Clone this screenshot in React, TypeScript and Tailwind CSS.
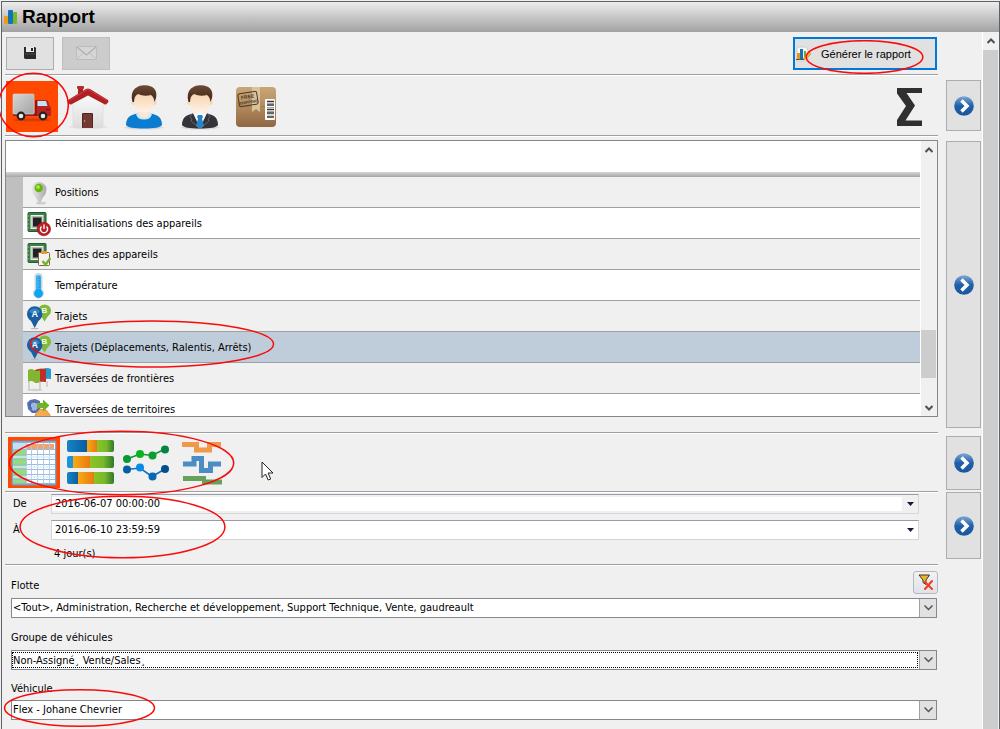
import React, { useState } from 'react';
import { clsx } from 'clsx';

type IconProps = { className?: string };

const TruckIcon = () => (
  <svg width="40" height="30" viewBox="0 0 40 30" className="mt-[2px]">
    <defs>
      <linearGradient id="cargo" x1="0" y1="0" x2="1" y2="1">
        <stop offset="0" stopColor="#d6d6d6" />
        <stop offset="1" stopColor="#a3a3a3" />
      </linearGradient>
    </defs>
    <ellipse cx="20" cy="27" rx="19" ry="1.500" fill="#d43c00" />
    <rect x="1" y="20" width="38" height="3" rx="1" fill="#8d2020" />
    <rect x="1" y="1" width="21" height="20" rx="1" fill="url(#cargo)" stroke="#dcdcdc" strokeWidth=".6" />
    <path d="M23 7h11q2 0 2.500 2l1 4q1.500.5 1.500 2v7q0 1-1 1H23z" fill="#b92323" />
    <path d="M25.500 8h8.500l1.500 5h-10z" fill="#bde6fb" />
    <path d="M25 7h-2v16h2z" fill="#8e1717" />
    <path d="M34 16.500h4" stroke="#7a1212" />
    <circle cx="9" cy="23" r="4.400" fill="#222" />
    <circle cx="9" cy="23" r="2.300" fill="#e9e9e9" />
    <circle cx="31" cy="23" r="4.400" fill="#222" />
    <circle cx="31" cy="23" r="2.300" fill="#e9e9e9" />
  </svg>
);

const HouseIcon = () => (
  <svg width="42" height="46" viewBox="0 0 42 46">
    <defs>
      <linearGradient id="wall" x1="0" y1="0" x2="0" y2="1">
        <stop offset="0" stopColor="#fdfdfd" />
        <stop offset="1" stopColor="#dcdcdc" />
      </linearGradient>
    </defs>
    <ellipse cx="21" cy="43" rx="20" ry="1.800" fill="#e5e5e5" />
    <path d="M6 17L21 7l15 10v24q0 3-3 3H9q-3 0-3-3z" fill="url(#wall)" stroke="#d5d5d5" strokeWidth=".5" />
    <path d="M11 4h5v6l-5 4z" fill="#a92424" />
    <rect x="10" y="2" width="7" height="3" rx="1" fill="#b52b2b" />
    <path d="M1 16L19 5q2-1.200 4 0l18 11q1 1 0 2.500L39.500 20q-1 1-2.500 0L21 11.500 5 20q-1.500 1-2.500 0L1 18.500Q.5 17 1 16z" fill="#b02024" />
    <path d="M2 16.500L20 5.800q1-.5 2 0l18 10.700" fill="none" stroke="#cf4043" strokeWidth="1" />
    <path d="M15 44V30.500q0-1.500 1.500-1.500h8q1.500 0 1.500 1.500V44z" fill="#733a33" />
    <path d="M15.500 43.500V30q0-.5.500-.5h9q.5 0 .5.5v13.500" fill="none" stroke="#54241f" />
    <circle cx="17.500" cy="37" r=".8" fill="#d8b36c" />
  </svg>
);

const PersonIcon = ({ suit = false }: { suit?: boolean }) => (
  <svg width="40" height="46" viewBox="0 0 40 46">
    <defs>
      <linearGradient id="skin" x1="0" y1="0" x2="0" y2="1">
        <stop offset="0" stopColor="#f3c9a0" />
        <stop offset="1" stopColor="#fff3e6" />
      </linearGradient>
      <linearGradient id="hair" x1="0" y1="0" x2="0" y2="1">
        <stop offset="0" stopColor="#6d4a35" />
        <stop offset="1" stopColor="#3c2416" />
      </linearGradient>
    </defs>
    <ellipse cx="20" cy="43.500" rx="19.500" ry="2" fill="#d9d9d9" />
    <path d="M2 41q0-7 5-9.500 4-2 8-2.500h10q4 .5 8 2.500 5 2.500 5 9.500-2 3.500-18 3.500T2 41z" fill={suit ? '#333338' : '#0b7cd0'} />
    {suit ? (
      <>
        <path d="M13 29h14l-7 15z" fill="#fafafa" />
        <path d="M18 31h4l1 2-1 1.500 2 7.500-4 3-4-3 2-7.500-1-1.500z" fill="#1f86cf" />
        <path d="M13 29l-3 4 2 2-1 2 8.500 7M27 29l3 4-2 2 1 2-8.500 7" fill="none" stroke="#77777c" strokeWidth=".7" />
      </>
    ) : (
      <path d="M12 30q1 5.500 8 5.500T28 30l-2-1.500H14z" fill="#cfe8f8" />
    )}
    <path d="M15 25h10v5q-1 3.500-5 3.500T15 30z" fill={suit ? 'none' : '#fbe7d2'} />
    <ellipse cx="9.500" cy="18" rx="2" ry="3" fill="#f6d3af" />
    <ellipse cx="30.500" cy="18" rx="2" ry="3" fill="#f6d3af" />
    <path d="M9.500 12q0-8 10.500-8t10.500 8v7q-2 9.500-10.500 9.500T9.500 19z" fill="url(#skin)" />
    <path d="M8.500 18Q6 9 11 4.500 16 0 24 1.500q10 2 8 12.500l-1.500 4q-.5-5-3.500-7-7 2-13-1-4 2-4 8z" fill="url(#hair)" />
  </svg>
);

const PackageIcon = () => (
  <svg width="40" height="40" viewBox="0 0 40 40">
    <defs>
      <linearGradient id="carton" x1="0" y1="0" x2="0" y2="1">
        <stop offset="0" stopColor="#c9a777" />
        <stop offset=".5" stopColor="#b18a5c" />
        <stop offset="1" stopColor="#916643" />
      </linearGradient>
    </defs>
    <rect width="40" height="40" rx="4" fill="url(#carton)" />
    <path d="M1 19.500h38" stroke="#a37c50" />
    <path d="M16 0h8v25l-4-3-4 3z" fill="#dac39b" />
    <g transform="rotate(-9 12 12)">
      <rect x="2.500" y="5.500" width="19" height="13" rx="2" fill="none" stroke="#49382a" />
      <text x="12" y="11.500" textAnchor="middle" fontSize="5" fontWeight="bold" fontFamily="Liberation Sans" fill="#49382a">FREE</text>
      <text x="12" y="16.500" textAnchor="middle" fontSize="4" fontWeight="bold" fontFamily="Liberation Sans" fill="#49382a">SHIPPING</text>
    </g>
    <rect x="29" y="12" width="10" height="21" rx="1" fill="#fff" />
    <path d="M31 14.500h7M31 18h7M31 22.500h7M31 26h7M31 30h7" stroke="#333" strokeWidth="1.300" />
    <path d="M31 16.500h7M31 20.500h7M31 24.500h7M31 28h7" stroke="#666" strokeWidth=".6" />
  </svg>
);

const SumIcon = () => (
  <svg width="26" height="38" viewBox="0 0 26 38">
    <path d="M0 0h25v5H9.500L18 17.500 8.500 32.500H25V38H0v-6l9-14L0 5.500z" fill="#303030" />
  </svg>
);

const LogoIcon = () => (
  <svg width="14" height="15" viewBox="0 0 14 15">
    <rect x="0" y="6" width="4" height="8" rx="1" fill="#f29a12" />
    <rect x="4" y="0" width="5" height="14" rx="1" fill="#0d74bd" />
    <rect x="9" y="2" width="4" height="12" rx="1" fill="#7bb827" />
  </svg>
);

const SaveIcon = () => (
  <svg width="12" height="12" viewBox="0 0 12 12" className="-mt-[2px]">
    <path d="M0 0h11l1 1v11H1l-1-1z" fill="#2b2b2b" />
    <rect x="2" y="0" width="8" height="5" fill="#e9e9e9" />
    <rect x="7" y="1" width="2" height="3" fill="#262626" />
    <path d="M1 7h10" stroke="#4b4b4b" />
  </svg>
);

const MailIcon = () => (
  <svg width="21" height="15" viewBox="0 0 21 15">
    <rect x=".5" y=".5" width="20" height="13" rx="1" fill="#d6d6d6" stroke="#bcbcbc" />
    <path d="M1 13l7-6.500M20 13l-7-6.500" stroke="#c2c2c2" fill="none" />
    <path d="M1 1l9.500 8L20 1" stroke="#b1b1b1" fill="none" strokeWidth="1.300" />
  </svg>
);

const ReportIcon = () => (
  <svg width="15" height="16" viewBox="0 0 15 16">
    <path d="M1 1h9l2 3v11H1z" fill="#f8f8f8" stroke="#cdcdcd" />
    <rect x="1" y="7" width="3" height="6" fill="#ef9316" />
    <rect x="4" y="3" width="3" height="10" fill="#1474b8" />
    <rect x="8" y="5" width="2" height="8" fill="#69ac28" />
    <path d="M8 11l5-5 2 2-5 5-3 1z" fill="#f5b531" stroke="#b78021" strokeWidth=".5" />
    <path d="M0 13.500h8" stroke="#555" />
  </svg>
);

const NextIcon = () => (
  <svg width="20" height="20" viewBox="0 0 20 20">
    <defs>
      <linearGradient id="ball" x1="0" y1="0" x2="0" y2="1">
        <stop offset="0" stopColor="#7fa8d8" />
        <stop offset=".5" stopColor="#205fa6" />
        <stop offset="1" stopColor="#19569f" />
      </linearGradient>
    </defs>
    <circle cx="10" cy="10" r="9.800" fill="url(#ball)" />
    <path d="M7.500 4.500L13 10l-5.500 5.500" fill="none" stroke="#fff" strokeWidth="3.500" />
  </svg>
);

const PositionIcon = () => (
  <svg width="24" height="26" viewBox="0 0 24 26">
    <defs>
      <linearGradient id="pin" x1="0" y1="0" x2="1" y2="0">
        <stop offset="0" stopColor="#e9e9e9" />
        <stop offset="1" stopColor="#aaaaac" />
      </linearGradient>
    </defs>
    <ellipse cx="14" cy="23" rx="5" ry="1.500" fill="#cfcfcf" />
    <path d="M4.500 9.500a7.500 7.500 0 0 1 15 0q0 4-3.500 8L12.500 24 8 16.500Q4.500 13 4.500 9.500z" fill="url(#pin)" />
    <circle cx="11.700" cy="8" r="4.200" fill="#65b80b" />
    <circle cx="11" cy="7" r="2" fill="#a3e33e" />
  </svg>
);

const Chip = () => (
  <>
    <rect x="1" y="1.500" width="18" height="19" rx="1" fill="#3d8047" stroke="#1f5d2d" />
    <rect x="4" y="4.500" width="12" height="13" fill="#b5bab5" stroke="#eef2ee" />
    <rect x="6" y="6.500" width="8.500" height="9" fill="#222" />
    <path d="M0 5h2M0 9h2M0 13h2M0 17h2" stroke="#88c48b" />
  </>
);

const ResetIcon = () => (
  <svg width="24" height="26" viewBox="0 0 24 26">
    <Chip />
    <circle cx="16.800" cy="18" r="6.800" fill="#bd2024" stroke="#8f1719" strokeWidth=".6" />
    <path d="M14.500 15.500a3.600 3.600 0 1 0 5 0M17 13.500v4.500" fill="none" stroke="#fff" strokeWidth="1.400" />
  </svg>
);

const TaskIcon = () => (
  <svg width="24" height="26" viewBox="0 0 24 26">
    <Chip />
    <rect x="11.500" y="10.500" width="11" height="13" rx="1" fill="#f4f2ef" stroke="#8e5a3f" />
    <rect x="14" y="9" width="6" height="3" rx="1" fill="#e59a2f" />
    <path d="M15.500 19l3 3.500L23.500 16" fill="none" stroke="#6db52c" strokeWidth="2.400" />
  </svg>
);

const ThermometerIcon = () => (
  <svg width="24" height="26" viewBox="0 0 24 26">
    <path d="M8 3q0-2.500 3.500-2.500T15 3v13.500a5 5 0 1 1-7 0z" fill="#d6e1e8" stroke="#b4c3cc" strokeWidth=".7" />
    <path d="M9 3.500q0-1.500 2.500-1.500T14 3.500V18H9z" fill="#37b2f5" />
    <circle cx="11.500" cy="20.500" r="4.400" fill="#0aa5f5" />
    <path d="M11.500 5h2M11.500 8h2M11.500 11h2M11.500 14h2" stroke="#1675b4" strokeWidth=".8" />
  </svg>
);

const TripIcon = () => (
  <svg width="24" height="26" viewBox="0 0 24 26">
    <path d="M11 6.500a6.500 6 0 0 1 13 0q0 3.500-3 5.500l-3.500 5.500-3.500-5.500Q11 10 11 6.500z" fill="#82b93c" />
    <path d="M0 10a7.700 7.700 0 0 1 15.400 0q0 4-4 7L7.700 24 4 17Q0 14 0 10z" fill="#195f9f" />
    <path d="M2 8a6 6 0 0 1 11 0q-5 3-11 0z" fill="#3686c4" />
    <ellipse cx="7.700" cy="24.500" rx="4" ry=".8" fill="#bbb" />
    <text x="7.700" y="13" textAnchor="middle" fontSize="9" fontWeight="bold" fontFamily="Liberation Sans" fill="#fff">A</text>
    <text x="17.500" y="9" textAnchor="middle" fontSize="8" fontWeight="bold" fontFamily="Liberation Sans" fill="#eff9df">B</text>
  </svg>
);

const BorderIcon = () => (
  <svg width="24" height="26" viewBox="0 0 24 26">
    <ellipse cx="8" cy="24" rx="8" ry="1.200" fill="#d2d2d2" />
    <path d="M16 3q4-2 8 0v10q-4-1-8 1z" fill="#249bcb" />
    <path d="M8 4q5-2.500 11-1v13q-5-1-11 1z" fill="#bc3026" />
    <path d="M1 4q3-2 6 0t6 0v12q-3 2-6 0t-6 0z" fill="#82b532" />
    <path d="M2 16v8M13 15v9M20 15v6" stroke="#b5b5b5" />
  </svg>
);

const TerritoryIcon = () => (
  <svg width="24" height="26" viewBox="0 0 24 26">
    <path d="M0 6l3-3 5-1 5 2v9l-4 3H5l-4-4z" fill="#5570b5" />
    <path d="M3 7l3-2 5 1 1 4-3 4H5z" fill="#a0b5e3" stroke="#3c4f8b" strokeDasharray="2 1" />
    <path d="M8 18l5-6 6 1 4 5-2 7H10z" fill="#f3ac4e" stroke="#e2882b" />
    <path d="M10 6h6V2.500l6.500 6-6.500 6V11h-6z" fill="#6db42b" />
  </svg>
);

const TableIcon = () => (
  <svg width="46" height="46" viewBox="0 0 46 46">
    <rect x="1" y="1" width="44" height="44" rx="1" fill="#8bb4d9" stroke="#6b98c3" />
    <rect x="2" y="3" width="42" height="40" fill="#fff" />
    <rect x="15" y="4" width="28" height="5" fill="#f3a26a" />
    <rect x="2" y="10" width="13" height="33" fill="#96d97f" />
    <rect x="2" y="3" width="13" height="6" fill="#c8def1" />
    <path d="M2 9.500h42M2 14.500h42M2 19.500h42M2 24.500h42M2 29.500h42M2 34.500h42M2 39.500h42" stroke="#96bde0" />
    <path d="M15.500 3v40M20.500 3v40M26.500 3v40M32.500 3v40M38.500 3v40" stroke="#a9c9e6" />
    <path d="M2 17h42M2 27h42M2 37h42" stroke="#dcecfa" strokeWidth="2" opacity=".7" />
  </svg>
);

const StackedIcon = () => (
  <svg width="48" height="46" viewBox="0 0 48 46">
    <defs>
      <linearGradient id="sb" x1="0" x2="1">
        <stop offset="0" stopColor="#1685c5" />
        <stop offset="1" stopColor="#07549a" />
      </linearGradient>
      <linearGradient id="so" x1="0" x2="1">
        <stop offset="0" stopColor="#f7ab12" />
        <stop offset="1" stopColor="#e97914" />
      </linearGradient>
      <linearGradient id="sg" x1="0" x2="1">
        <stop offset="0" stopColor="#90c822" />
        <stop offset=".6" stopColor="#78b829" />
        <stop offset="1" stopColor="#2f7a2b" />
      </linearGradient>
    </defs>
    <rect x="1" y="0" width="24" height="12" rx="2" fill="url(#sb)" />
    <rect x="29" y="0" width="19" height="12" rx="2" fill="url(#sg)" />
    <rect x="21" y="0" width="10" height="12" fill="url(#so)" />
    <rect x="1" y="16" width="9" height="12" rx="2" fill="#1c94db" />
    <rect x="21" y="16" width="27" height="12" rx="2" fill="url(#sg)" />
    <rect x="7" y="16" width="17" height="12" fill="url(#so)" />
    <rect x="1" y="32" width="14" height="12" rx="2" fill="url(#sb)" />
    <rect x="25" y="32" width="23" height="12" rx="2" fill="url(#sg)" />
    <rect x="12" y="32" width="16" height="12" fill="url(#so)" />
  </svg>
);

const LinesIcon = () => (
  <svg width="46" height="36" viewBox="0 0 46 36">
    <path d="M4 14l13-5 12 1.500L42 4" fill="none" stroke="#14913a" strokeWidth="1.600" />
    <circle cx="4" cy="14" r="4" fill="#069a35" />
    <circle cx="17" cy="9" r="4" fill="#09b51e" />
    <circle cx="29.500" cy="10.500" r="4" fill="#0a9f2f" />
    <circle cx="42" cy="4.500" r="4" fill="#048442" />
    <path d="M4 24.500L17 23l12 8.500 13-7.500" fill="none" stroke="#136eb5" strokeWidth="1.600" />
    <circle cx="4" cy="24.500" r="4" fill="#075da4" />
    <circle cx="17" cy="22.500" r="4" fill="#078ae8" />
    <circle cx="29.500" cy="31.500" r="4" fill="#0567b5" />
    <circle cx="42" cy="24" r="4" fill="#034f8a" />
  </svg>
);

const StepsIcon = () => (
  <svg width="40" height="44" viewBox="0 0 40 44">
    <path d="M0 3.500h14.500V9h13V3.500H39" fill="none" stroke="#ee9a4a" strokeWidth="5" />
    <path d="M1 23h11v-5.500h7.500v12h9V23H39" fill="none" stroke="#4a8cc4" strokeWidth="5" />
    <path d="M1 37.500h23M20 41h20" fill="none" stroke="#66a05a" strokeWidth="5" />
  </svg>
);

const FilterClearIcon = () => (
  <svg width="16" height="17" viewBox="0 0 16 17">
    <path d="M1 1h10.500L8 6v4.500L5 8.500V6z" fill="#e8b62f" stroke="#44351a" />
    <path d="M7 8l7 7M14 7l-7 8" stroke="#f23b21" strokeWidth="2" strokeLinecap="round" />
  </svg>
);

const Chevron = ({ className }: IconProps) => (
  <svg width="9" height="6" viewBox="0 0 9 6" className={className}>
    <path d="M.5 .5l4 4 4-4" fill="none" stroke="#555" strokeWidth="1.500" />
  </svg>
);

const ScrollArrow = ({ className }: IconProps) => (
  <svg width="8" height="6" viewBox="0 0 8 6" className={className}>
    <path d="M.5 1L4 4.500 7.500 1" fill="none" stroke="#505050" strokeWidth="2" />
  </svg>
);

const Pointer = ({ className }: IconProps) => (
  <svg width="13" height="20" viewBox="0 0 13 20" className={className}>
    <path d="M1 1v15.500l3.500-3.500 2.700 6 2.500-1-2.600-6H12z" fill="#fff" stroke="#222" />
  </svg>
);

// Red marker drawn around a control
const Ring = ({ className }: IconProps) => (
  <svg className={clsx('pointer-events-none absolute z-10 max-w-none', className)} aria-hidden="true">
    <ellipse cx="50%" cy="50%" rx="49%" ry="48%" fill="none" stroke="#fa0a0a" strokeWidth="1.500" />
  </svg>
);

const Divider = () => <div className="mr-px ml-[3px] h-[2px] border-t border-[#a0a0a0] bg-white" />;

const reportTypes = [
  { label: 'Positions', Icon: PositionIcon },
  { label: 'Réinitialisations des appareils', Icon: ResetIcon },
  { label: 'Tâches des appareils', Icon: TaskIcon },
  { label: 'Température', Icon: ThermometerIcon },
  { label: 'Trajets', Icon: TripIcon },
  { label: 'Trajets (Déplacements, Ralentis, Arrêts)', Icon: TripIcon },
  { label: 'Traversées de frontières', Icon: BorderIcon },
  { label: 'Traversées de territoires', Icon: TerritoryIcon },
];

const subjects = [
  { label: 'Véhicules', icon: <TruckIcon /> },
  { label: 'Sites', icon: <HouseIcon /> },
  { label: 'Utilisateurs', icon: <PersonIcon /> },
  { label: 'Chauffeurs', icon: <PersonIcon suit /> },
  { label: 'Colis', icon: <PackageIcon /> },
];

const views = [
  { label: 'Tableau', icon: <TableIcon /> },
  { label: 'Barres', icon: <StackedIcon /> },
  { label: 'Lignes', icon: <LinesIcon /> },
  { label: 'Étapes', icon: <StepsIcon /> },
];

interface TabsProps {
  items: { label: string; icon: React.ReactNode }[];
}

const IconTabs: React.FC<TabsProps> = ({ items }) => {
  const [active, setActive] = useState(0);
  return (
    <div className="flex gap-1">
      {items.map((item, i) => (
        <button
          key={item.label}
          aria-label={item.label}
          onClick={() => setActive(i)}
          className={clsx('flex h-[51px] w-[52px] items-center justify-center', active === i && 'bg-[#ff4800]')}
        >
          {item.icon}
        </button>
      ))}
    </div>
  );
};

interface DateFieldProps {
  id: string;
  label: string;
  value: string;
  muted?: boolean;
}

const DateField: React.FC<DateFieldProps> = ({ id, label, value, muted }) => {
  const [text, setText] = useState(value);
  return (
    <div className="flex items-center">
      <label htmlFor={id} className="w-[38px]">{label}</label>
      <div className={clsx('flex h-5 flex-1 items-center border border-[#d5d5dc] border-t-[#9a9aa8]', muted ? 'bg-[#f0f0f0]' : 'bg-white')}>
        <input
          id={id}
          value={text}
          onChange={(e) => setText(e.target.value)}
          className="h-[14px] min-w-0 flex-1 bg-white px-[3px] outline-none"
        />
        <button aria-label={`Choisir ${label}`} className="flex h-full w-4 items-center justify-center">
          <svg width="7" height="4" viewBox="0 0 7 4"><path d="M0 0h7L3.500 4z" fill="#1c1838" /></svg>
        </button>
      </div>
    </div>
  );
};

interface ComboProps {
  id: string;
  value: string;
  focused?: boolean;
}

const Combo: React.FC<ComboProps> = ({ id, value, focused }) => (
  <div className="relative flex h-5 border border-[#828790] bg-white">
    <select
      id={id}
      className={clsx(
        'min-w-0 flex-1 appearance-none bg-white outline-none',
        focused ? 'my-px mr-[18px] border border-dotted border-black' : 'mr-[18px] pl-px'
      )}
    >
      <option>{value}</option>
    </select>
    <span className="pointer-events-none absolute inset-y-0 right-0 flex w-[17px] items-center justify-center border-l border-[#a0a0a0] bg-[#e1e1e1]">
      <Chevron />
    </span>
  </div>
);

const sideButtons = ['h-[51px] mb-[10px]', 'h-[287px] mb-2', 'h-[54px] mb-[2px]', 'h-[67px]'];

export default function App() {
  const [selected, setSelected] = useState(5);

  return (
    <div className="flex min-h-screen overflow-hidden bg-[#f0f0f0] pt-px pl-px font-['DejaVu_Sans_Condensed','DejaVu_Sans',sans-serif] text-[11px] leading-4 text-black">
      <div className="flex flex-1 flex-col border-t border-r border-l border-[#5f6264]">
        <header className="flex h-[30px] items-center gap-1 bg-linear-to-b from-[#ededed] to-[#a2a2a2] pl-[2px]">
          <LogoIcon />
          <h1 className="font-['Liberation_Sans',Arial,sans-serif] text-[19px] leading-6 font-bold">Rapport</h1>
        </header>

        <div className="flex flex-1">
          <main className="min-w-0 flex-1">
            <div className="flex justify-between pt-[5px] pr-[2px] pb-1 pl-1">
              <div className="flex gap-2">
                <button aria-label="Enregistrer" className="flex h-[33px] w-12 items-center justify-center border border-[#adadad] bg-[#e1e1e1]">
                  <SaveIcon />
                </button>
                <button aria-label="Envoyer" disabled className="flex h-[33px] w-12 items-center justify-center border border-[#bfbfbf] bg-[#cccccc]">
                  <MailIcon />
                </button>
              </div>
              <button className="relative flex h-[33px] w-36 items-center gap-[10px] border-2 border-[#0078d7] bg-[#e1e1e1] pl-px">
                <ReportIcon />
                <span className="font-['Liberation_Sans',Arial,sans-serif]">Générer le rapport</span>
                <Ring className="top-px left-[10px] h-[34px] w-[119px]" />
              </button>
            </div>
            <Divider />

            <div className="relative flex items-center justify-between pt-[5px] pr-4 pb-[3px] pl-1">
              <IconTabs items={subjects} />
              <button aria-label="Somme"><SumIcon /></button>
              <Ring className="-top-1 -left-1 h-[66px] w-[71px]" />
            </div>
            <Divider />

            <section className="mt-[3px] mr-px ml-[3px] flex h-[277px] border border-[#828790]">
              <div className="flex min-w-0 flex-1 flex-col overflow-hidden border-r border-white">
                <div className="h-[31px] shrink-0 bg-white" />
                <div className="h-[5px] shrink-0 bg-linear-to-b from-[#d8d8d8] to-[#a6a6a6]" />
                <ul className="min-h-0 flex-1 overflow-hidden bg-[#bfbfbf] pl-[17px]">
                  {reportTypes.map(({ label, Icon }, i) => (
                    <li key={label} className="relative">
                      <button
                        onClick={() => setSelected(i)}
                        className={clsx(
                          'flex h-[31px] w-full items-center gap-1 border-b border-[#a0a0a0] pt-px pl-1 text-left',
                          selected === i ? 'bg-[#bfcddb]' : i % 2 ? 'bg-white' : 'bg-[#f0f0f0]'
                        )}
                      >
                        <Icon />
                        {label}
                      </button>
                      {i === 5 && <Ring className="-top-3 left-[5px] h-12 w-[248px]" />}
                    </li>
                  ))}
                </ul>
              </div>
              <div className="flex w-4 flex-col bg-[#f0f0f0]">
                <button aria-label="Monter" className="flex h-[17px] w-[15px] items-center justify-center">
                  <ScrollArrow className="rotate-180" />
                </button>
                <div className="flex flex-1 flex-col justify-end pb-[21px]">
                  <div className="h-12 w-[15px] bg-[#cdcdcd]" />
                </div>
                <button aria-label="Descendre" className="flex h-[17px] w-[15px] items-center justify-center">
                  <ScrollArrow />
                </button>
              </div>
            </section>

            <div className="h-[15px]" />
            <Divider />
            <div className="relative pt-[3px] pb-[3px] pl-[6px]">
              <IconTabs items={views} />
              <Pointer className="absolute top-[27px] left-[259px]" />
              <Ring className="-top-1 left-[5px] h-[66px] w-[229px]" />
            </div>
            <Divider />

            <div className="relative mt-px mr-5 ml-[11px] flex h-[70px] flex-col gap-[6px]">
              <DateField id="from" label="De" value="2016-06-07 00:00:00" muted />
              <DateField id="to" label="À" value="2016-06-10 23:59:59" />
              <p className="pl-[41px]">4 jour(s)</p>
              <Ring className="top-px left-[5px] h-[64px] w-[209px]" />
            </div>
            <Divider />

            <div className="mr-[2px] ml-[9px] pt-1 pb-2">
              <div className="mb-1 flex items-center justify-between">
                <label htmlFor="fleet" className="pt-2">Flotte</label>
                <button aria-label="Effacer le filtre" className="-mr-px flex h-[23px] w-[25px] items-center justify-center rounded-[3px] border border-[#b4b8c2] bg-linear-to-b from-[#f2f2f4] to-[#dfe2e8]">
                  <FilterClearIcon />
                </button>
              </div>
              <Combo id="fleet" value="<Tout>, Administration, Recherche et développement, Support Technique, Vente, gaudreault" />
              <label htmlFor="group" className="block pt-3 pb-1">Groupe de véhicules</label>
              <Combo id="group" value="Non-Assigné¸ Vente/Sales¸" focused />
              <div className="relative">
                <label htmlFor="vehicle" className="block pt-[11px] pb-[3px]">Véhicule</label>
                <Combo id="vehicle" value="Flex - Johane Chevrier" />
                <Ring className="top-[19px] -left-[8px] h-[38px] w-[153px]" />
              </div>
            </div>
          </main>

          <aside className="ml-[7px] flex w-[35px] flex-col pt-12">
            {sideButtons.map((size, i) => (
              <button key={i} aria-label={`Suivant ${i + 1}`} className={clsx('flex items-center justify-center border border-[#adadad] bg-[#e1e1e1]', size)}>
                <NextIcon />
              </button>
            ))}
          </aside>

          <div className="ml-px flex w-[17px] flex-col border-l border-white">
            <button aria-label="Défiler vers le haut" className="flex h-[18px] w-[15px] items-center justify-center">
              <ScrollArrow className="rotate-180" />
            </button>
            <div className="mr-px flex-1 bg-[#cdcdcd]" />
          </div>
        </div>
      </div>
    </div>
  );
}
